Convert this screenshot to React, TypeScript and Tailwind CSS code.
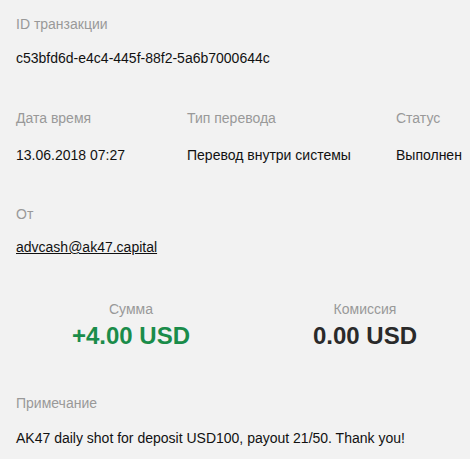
export default function App() {
  return (
    <div
      className="min-h-[459px] w-[470px] overflow-hidden bg-[#f2f2f2] px-4 pt-4 text-[14px] leading-[16px] text-[#111]"
      style={{ fontFamily: '"Liberation Sans", Arial, sans-serif' }}
    >
      <div className="text-[#999]">ID транзакции</div>
      <div className="mt-[18px]">c53bfd6d-e4c4-445f-88f2-5a6b7000644c</div>

      <div className="mt-[44px] flex">
        <div className="w-[171px] shrink-0">
          <div className="text-[#999]">Дата время</div>
          <div className="mt-[21px]">13.06.2018 07:27</div>
        </div>
        <div className="w-[209px] shrink-0">
          <div className="text-[#999]">Тип перевода</div>
          <div className="mt-[21px]">Перевод внутри системы</div>
        </div>
        <div className="shrink-0">
          <div className="text-[#999]">Статус</div>
          <div className="mt-[21px] whitespace-nowrap">Выполнен</div>
        </div>
      </div>

      <div className="mt-[43px] text-[#999]">От</div>
      <div className="mt-[17px]">
        <a className="underline">advcash@ak47.capital</a>
      </div>

      <div className="-ml-[2px] mt-[46px] flex">
        <div className="w-[234px] shrink-0 text-center">
          <div className="text-[#999]">Сумма</div>
          <div className="mt-[6px] text-[24px] font-bold leading-[26px] text-[#1a8c4a]">+4.00 USD</div>
        </div>
        <div className="w-[234px] shrink-0 text-center">
          <div className="text-[#999]">Комиссия</div>
          <div className="mt-[6px] text-[24px] font-bold leading-[26px] text-[#2a2a2a]">0.00 USD</div>
        </div>
      </div>

      <div className="mt-[46px] text-[#999]">Примечание</div>
      <div className="mt-[19px]">AK47 daily shot for deposit USD100, payout 21/50. Thank you!</div>
    </div>
  );
}
